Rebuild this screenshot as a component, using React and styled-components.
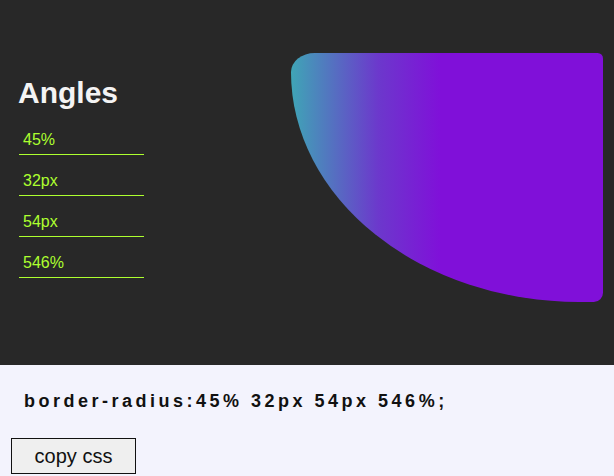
import React, { useState } from "react";
import styled, { createGlobalStyle } from "styled-components";

const GlobalStyle = createGlobalStyle`
  body {
    margin: 0;
    font-family: "Liberation Sans", Arial, sans-serif;
    background: #f3f3fd;
  }
`;

const Stage = styled.section`
  height: 365px;
  background: #282828;
  display: flex;
  align-items: center;
  justify-content: space-between;
  padding: 0 11px 0 18px;
  box-sizing: border-box;
`;

const Controls = styled.div`
  display: flex;
  flex-direction: column;
  padding-bottom: 11px;
`;

const Title = styled.h1`
  margin: 0 0 18px;
  color: #f4f4f4;
  font-size: 30px;
  line-height: 34px;
  font-weight: bold;
`;

const AngleInput = styled.input`
  width: 125px;
  box-sizing: border-box;
  margin: 0 0 14px 1px;
  padding: 2px 4px 4px;
  height: 27px;
  background: transparent;
  border: none;
  border-bottom: 1px solid greenyellow;
  color: greenyellow;
  font-family: "Liberation Sans", Arial, sans-serif;
  font-size: 16px;
  outline: none;
  caret-color: greenyellow;
  &:last-child {
    margin-bottom: 0;
  }
`;

const Shape = styled.div`
  width: 312px;
  height: 249px;
  margin-top: -11px;
  background: linear-gradient(90deg, #3fa5b6 0%, #6c38cc 28%, #8010d9 48%, #8010d9 100%);
  border-radius: ${p => p.radius};
`;

const Output = styled.section`
  padding: 26px 11px 0;
`;

const Code = styled.p`
  margin: 0 0 26px 13px;
  font-size: 18px;
  font-weight: bold;
  letter-spacing: 3.5px;
  color: #111;
`;

const CopyButton = styled.button`
  width: 125px;
  height: 36px;
  background: #efefef;
  border: 1px solid #111;
  font-family: "Liberation Sans", Arial, sans-serif;
  font-size: 20px;
  color: #111;
  padding: 0;
`;

const App = () => {
  const [angles, setAngles] = useState(["45%", "32px", "54px", "546%"]);
  const radius = angles.join(" ");

  const update = (i, v) => setAngles(a => a.map((x, j) => (j === i ? v : x)));

  return (
    <>
      <GlobalStyle />
      <Stage>
        <Controls>
          <Title>Angles</Title>
          {angles.map((a, i) => (
            <AngleInput key={i} value={a} onChange={e => update(i, e.target.value)} />
          ))}
        </Controls>
        <Shape radius={radius} />
      </Stage>
      <Output>
        <Code>border-radius:{radius};</Code>
        <CopyButton>copy css</CopyButton>
      </Output>
    </>
  );
};

export default App;
